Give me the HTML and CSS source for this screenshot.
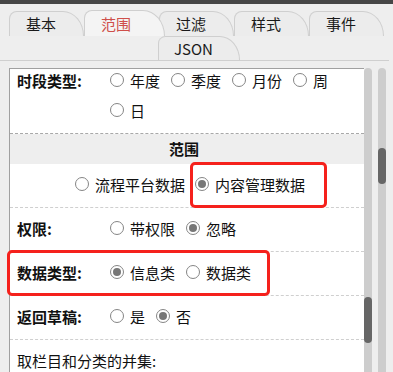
FILE: index.html
```html
<!DOCTYPE html>
<html lang="zh-CN">
<head>
    <meta charset="UTF-8">
    <title>范围设置</title>
    <link rel="stylesheet" href="styles.css">
</head>
<body>
<div class="topbar"></div>

<div class="tabs">
    <div class="tab-row">
        <div class="tab">基本</div>
        <div class="tab active">范围</div>
        <div class="tab">过滤</div>
        <div class="tab">样式</div>
        <div class="tab">事件</div>
    </div>
    <div class="tab-row second">
        <div class="tab wide">JSON</div>
    </div>
</div>

<div class="main">
    <div class="panel">
        <div class="panel-body">
            <div class="row first">
                <div class="label">时段类型:</div>
                <div class="options">
                    <span class="opt"><i class="radio"></i>年度</span>
                    <span class="opt"><i class="radio"></i>季度</span>
                    <span class="opt"><i class="radio"></i>月份</span>
                    <span class="opt"><i class="radio"></i>周</span>
                    <span class="opt"><i class="radio"></i>日</span>
                </div>
            </div>
            <div class="section">范围</div>
            <div class="row center">
                <span class="opt"><i class="radio"></i>流程平台数据</span>
                <span class="opt"><i class="radio on"></i>内容管理数据</span>
            </div>
            <div class="row">
                <div class="label">权限:</div>
                <div class="options">
                    <span class="opt"><i class="radio"></i>带权限</span>
                    <span class="opt"><i class="radio on"></i>忽略</span>
                </div>
            </div>
            <div class="row">
                <div class="label">数据类型:</div>
                <div class="options">
                    <span class="opt"><i class="radio on"></i>信息类</span>
                    <span class="opt"><i class="radio"></i>数据类</span>
                </div>
            </div>
            <div class="row">
                <div class="label">返回草稿:</div>
                <div class="options">
                    <span class="opt"><i class="radio"></i>是</span>
                    <span class="opt"><i class="radio on"></i>否</span>
                </div>
            </div>
            <div class="row plain">取栏目和分类的并集:</div>
        </div>
    </div>
    <div class="track inner"><div class="thumb"></div></div>
    <div class="track outer"><div class="thumb"></div></div>

    <!-- 标注框 -->
    <div class="mark mark-scope"></div>
    <div class="mark mark-type"></div>
</div>
</body>
</html>
```

FILE: styles.css
```css
* { box-sizing: border-box; }
html, body { margin: 0; height: 100%; }
body {
    background: #eeeeee;
    font-family: "Noto Sans CJK SC", "Noto Sans", sans-serif;
    font-size: 15px;
    color: #111;
    overflow: hidden;
}

.topbar { height: 4px; background: #464646; }

/* tabs */
.tabs { padding-top: 7px; border-bottom: 1px solid #cfcfcf; margin-right: 4px; }
.tab-row { display: flex; padding-left: 9px; height: 25px; }
.tab-row.second { padding-left: 158px; height: 24px; }
.tab {
    width: 75px;
    padding-right: 11px;
    text-align: center;
    line-height: 24px;
    border: 1px solid #cfcfcf;
    border-bottom: none;
    border-radius: 8px 22px 0 0 / 8px 26px 0 0;
    background: #ececec;
    color: #1a1a1a;
}
.tab.active {
    width: 81px;
    margin-right: -6px;
    padding-right: 17px;
    position: relative;
    z-index: 1;
    margin-top: -1px;
    line-height: 26px;
    background: #f4f4f4;
    color: #cf4f4a;
}
.tab.wide { width: 82px; line-height: 23px; }

/* main area */
.main { position: relative; display: flex; margin-top: 7px; padding-left: 9px; height: 304px; }
.panel {
    width: 355px;
    height: 100%;
    overflow: hidden;
    background: #fff;
    border-left: 1px solid #a0a0a0;
    border-top: 1px solid #a0a0a0;
}
.panel-body { margin-top: -9px; }

.row {
    display: flex;
    padding: 6px 0 7px 7px;
    line-height: 30px;
    border-bottom: 1px dashed #cfcfcf;
}
.row.first { border-bottom-color: #a8a8a8; }
.row.center { padding-left: 65px; }
.row.plain { border-bottom: none; }
.label { width: 93px; flex: none; font-weight: bold; }
.options { display: flex; flex-wrap: wrap; width: 250px; }

.opt { display: inline-flex; align-items: center; margin-right: 11px; }
.row.center .opt { margin-right: 10px; }
.radio {
    width: 14px;
    height: 14px;
    margin: -3px 6px 0 0;
    border: 1px solid #858585;
    border-radius: 50%;
    background: #fff;
    display: inline-block;
    position: relative;
}
.radio.on::after {
    content: "";
    position: absolute;
    left: 2px;
    top: 2px;
    width: 8px;
    height: 8px;
    border-radius: 50%;
    background: #777;
}

.section {
    background: #eeeeee;
    text-align: center;
    font-weight: bold;
    line-height: 30px;
    padding-right: 6px;
}

/* scrollbars */
.track { width: 8px; height: 100%; background: #cdcdcd; border-radius: 4px 4px 0 0; }
.track.outer { margin-left: 6px; }
.thumb { width: 8px; border-radius: 4px; background: #666; }
.inner .thumb { margin-top: 229px; height: 46px; }
.outer .thumb { margin-top: 80px; height: 36px; }

/* annotation boxes */
.mark { position: absolute; border: 3px solid #f5211c; border-radius: 5px; }
.mark-scope { left: 190px; top: 94px; width: 137px; height: 46px; }
.mark-type { left: 7px; top: 182px; width: 263px; height: 46px; }
```
